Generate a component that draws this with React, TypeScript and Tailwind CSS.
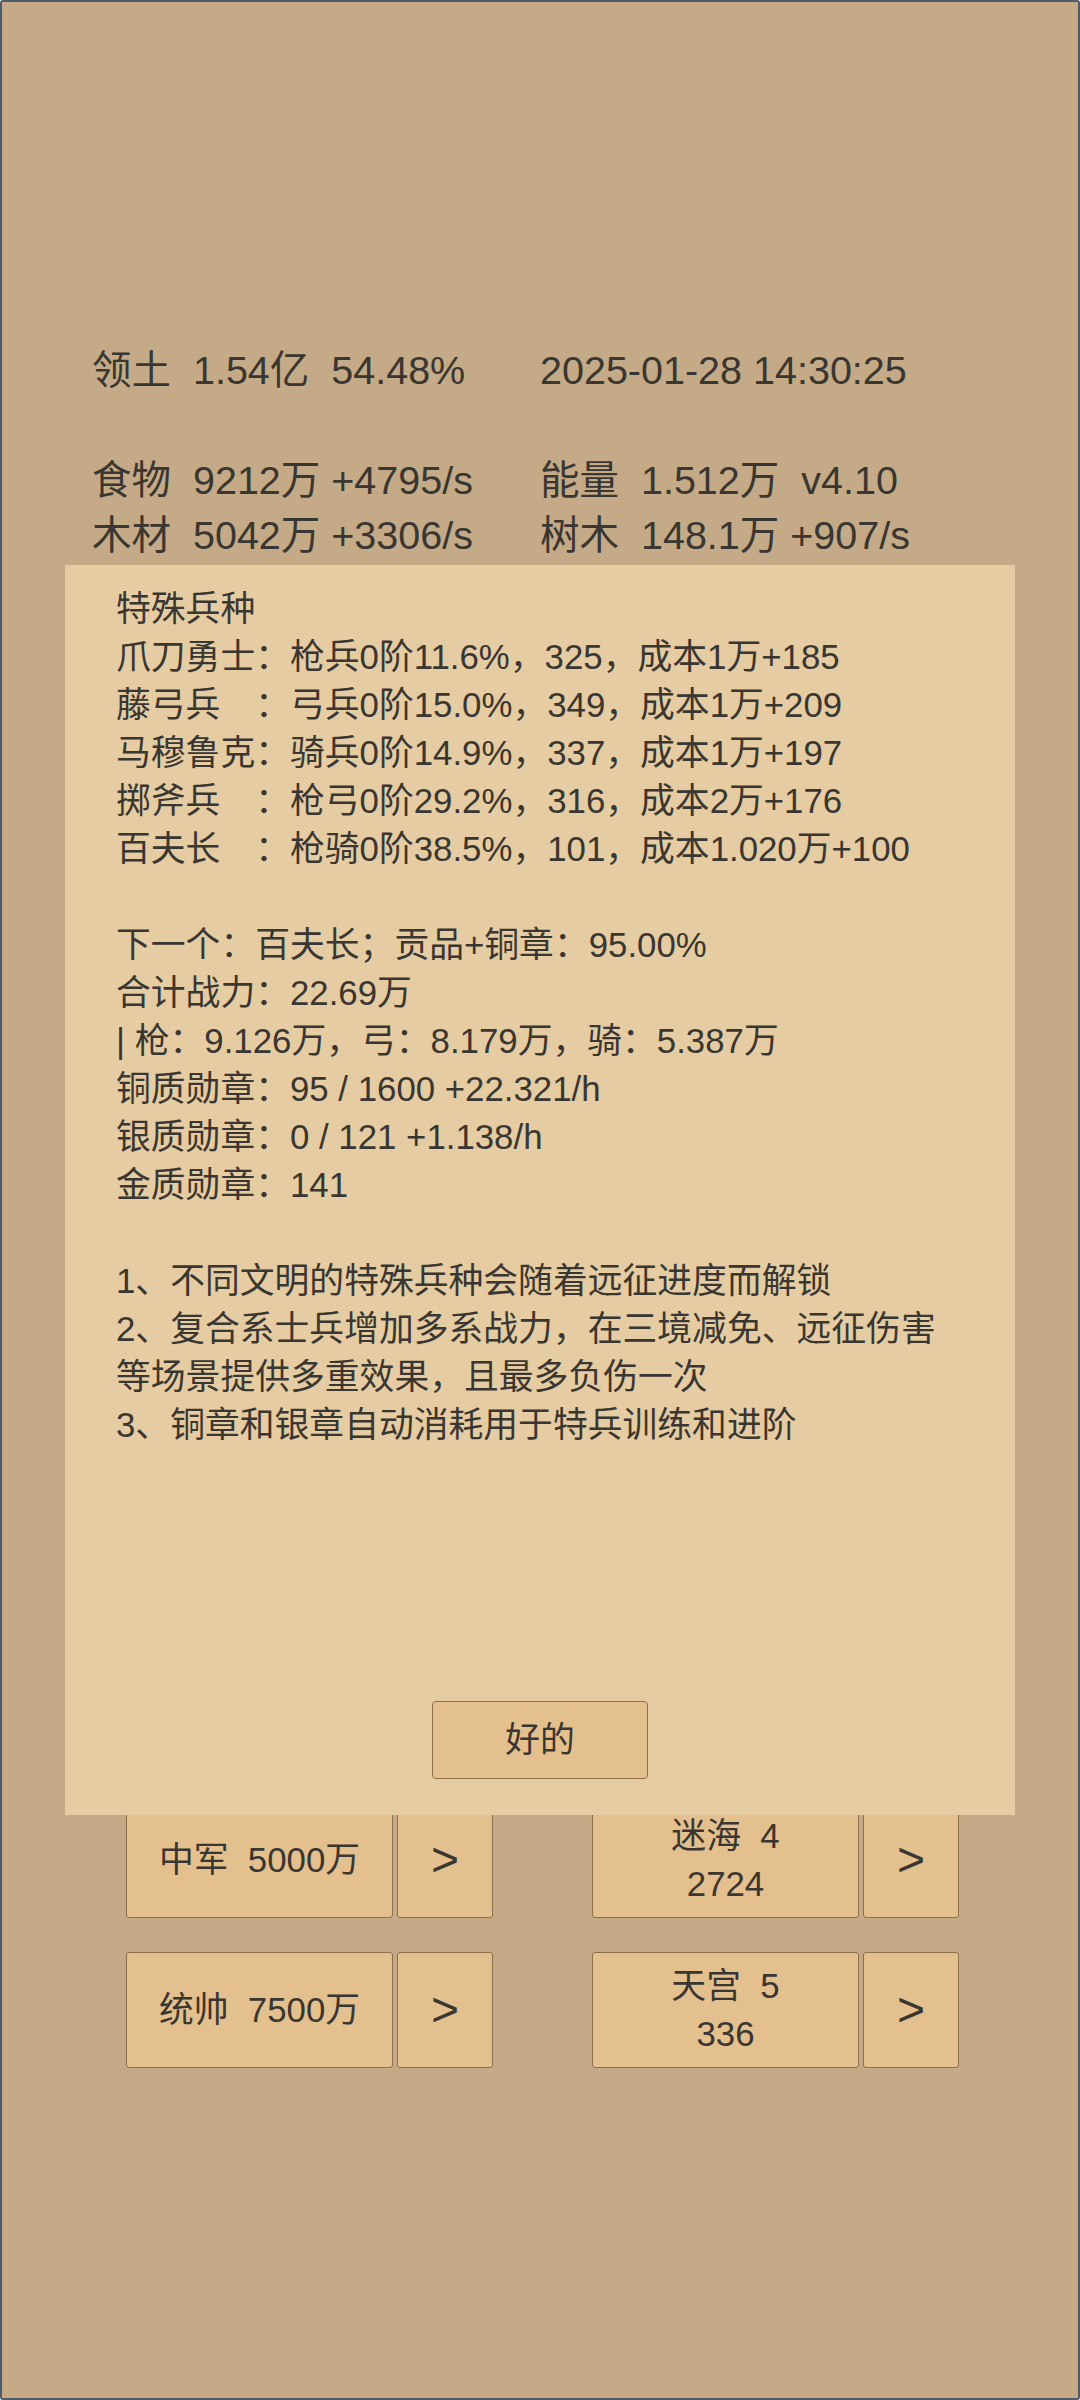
import React from 'react';

const font = "font-[family-name:'Liberation_Sans','Noto_Sans_CJK_SC',sans-serif]";

const stats: [string, string][] = [
    ['领土  1.54亿  54.48%', '2025-01-28 14:30:25'],
    ['', ''],
    ['食物  9212万 +4795/s', '能量  1.512万  v4.10'],
    ['木材  5042万 +3306/s', '树木  148.1万 +907/s'],
];

const dialogLines = [
    '特殊兵种',
    '爪刀勇士：枪兵0阶11.6%，325，成本1万+185',
    '藤弓兵　：弓兵0阶15.0%，349，成本1万+209',
    '马穆鲁克：骑兵0阶14.9%，337，成本1万+197',
    '掷斧兵　：枪弓0阶29.2%，316，成本2万+176',
    '百夫长　：枪骑0阶38.5%，101，成本1.020万+100',
    '',
    '下一个：百夫长；贡品+铜章：95.00%',
    '合计战力：22.69万',
    '| 枪：9.126万，弓：8.179万，骑：5.387万',
    '铜质勋章：95 / 1600 +22.321/h',
    '银质勋章：0 / 121 +1.138/h',
    '金质勋章：141',
    '',
    '1、不同文明的特殊兵种会随着远征进度而解锁',
    '2、复合系士兵增加多系战力，在三境减免、远征伤害',
    '等场景提供多重效果，且最多负伤一次',
    '3、铜章和银章自动消耗用于特兵训练和进阶',
];

const rows = [
    { left: ['中军  5000万'], right: ['迷海  4', '2724'] },
    { left: ['统帅  7500万'], right: ['天宫  5', '336'] },
];

function ActionButton({ lines }: { lines: string[] }) {
    return (
        <div className="flex gap-[4px]">
            <button className="w-[267px] h-[116px] bg-[#e4c08e] border border-[#8c6f4c] rounded-[3px] flex flex-col items-center justify-center text-[34.8px] leading-[48px] whitespace-pre">
                {lines.map((l, i) => (
                    <span key={i}>{l}</span>
                ))}
            </button>
            <button className="w-[96px] h-[116px] bg-[#e4c08e] border border-[#8c6f4c] rounded-[3px] flex items-center justify-center text-[48px]">
                &gt;
            </button>
        </div>
    );
}

export default function App() {
    return (
        <div className={`relative w-[1080px] h-[2400px] overflow-hidden border-2 border-[#4f596b] rounded-[3px] bg-[#c4aa87] text-[#3a3631] ${font}`}>
            {/* Resources */}
            <div className="pt-[341px] pl-[90px] grid grid-cols-[448px_1fr] text-[39.5px] leading-[55px] whitespace-pre">
                {stats.map(([a, b], i) => (
                    <React.Fragment key={i}>
                        <div className="h-[55px]">{a}</div>
                        <div className="h-[55px]">{b}</div>
                    </React.Fragment>
                ))}
            </div>

            {/* Buttons */}
            <div className="mt-[1239px] pl-[124px] flex flex-col gap-[34px]">
                {rows.map((r, i) => (
                    <div key={i} className="flex gap-[99px]">
                        <ActionButton lines={r.left} />
                        <ActionButton lines={r.right} />
                    </div>
                ))}
            </div>

            {/* Dialog */}
            <div className="absolute left-[63px] top-[563px] w-[950px] h-[1250px] bg-[#e5cca2] flex flex-col">
                <div className="pt-[20px] pl-[51px] text-[34.8px] leading-[48px] whitespace-pre">
                    {dialogLines.map((l, i) => (
                        <div key={i} className="h-[48px]">{l}</div>
                    ))}
                </div>
                <div className="mt-auto mb-[36px] flex justify-center">
                    <button className="w-[216px] h-[78px] bg-[#e4c08e] border border-[#8c6f4c] rounded-[4px] text-[34.8px]">
                        好的
                    </button>
                </div>
            </div>
        </div>
    );
}
